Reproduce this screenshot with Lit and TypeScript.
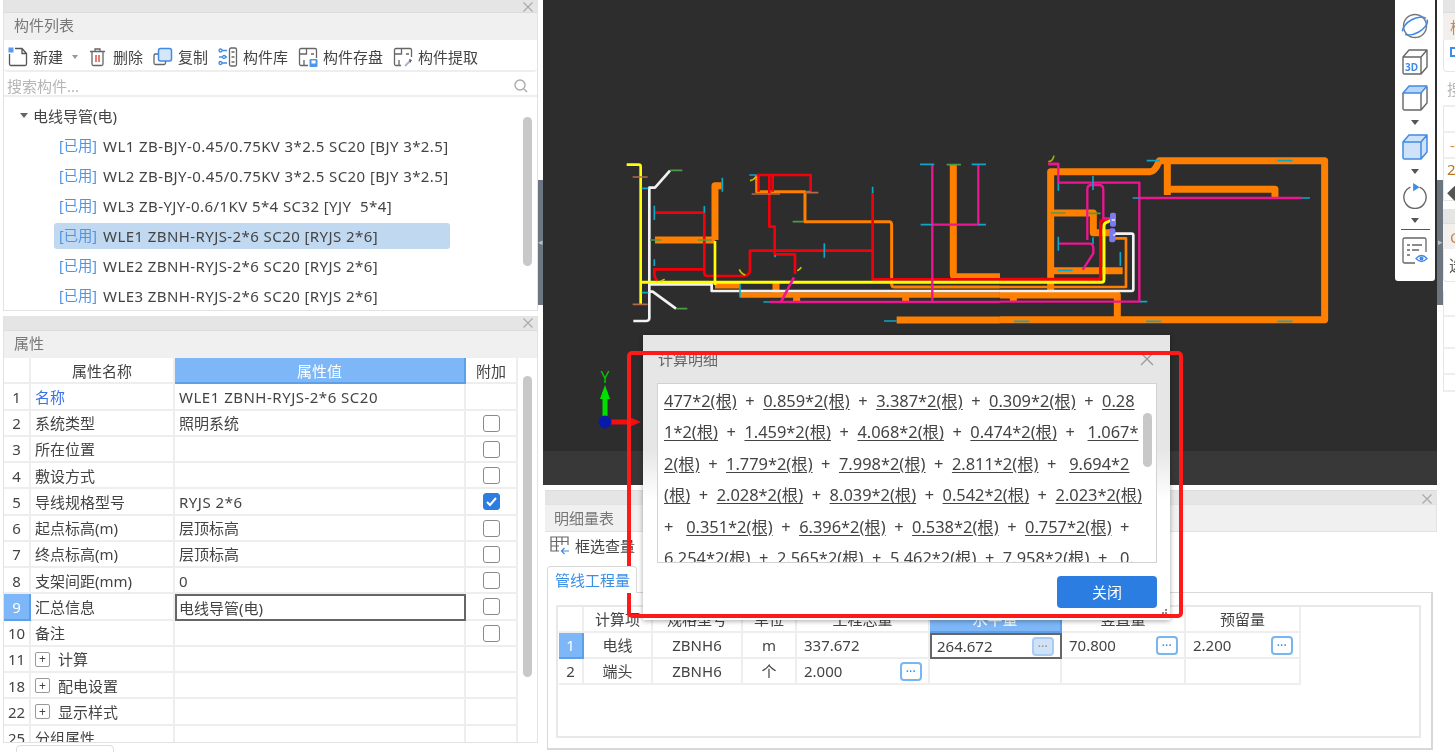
import { LitElement, html, css, svg } from 'lit';
import { customElement } from 'lit/decorators.js';

const TREE = [
  'WL1 ZB-BJY-0.45/0.75KV 3*2.5 SC20 [BJY 3*2.5]',
  'WL2 ZB-BJY-0.45/0.75KV 3*2.5 SC20 [BJY 3*2.5]',
  'WL3 ZB-YJY-0.6/1KV 5*4 SC32 [YJY  5*4]',
  'WLE1 ZBNH-RYJS-2*6 SC20 [RYJS 2*6]',
  'WLE2 ZBNH-RYJS-2*6 SC20 [RYJS 2*6]',
  'WLE3 ZBNH-RYJS-2*6 SC20 [RYJS 2*6]',
];

// no, name, value, check: 0 none / 1 empty / 2 ticked, plus = expandable row
const PROPS: [string, string, string, number, boolean?][] = [
  ['1', '名称', 'WLE1 ZBNH-RYJS-2*6 SC20', 0],
  ['2', '系统类型', '照明系统', 1],
  ['3', '所在位置', '', 1],
  ['4', '敷设方式', '', 1],
  ['5', '导线规格型号', 'RYJS 2*6', 2],
  ['6', '起点标高(m)', '层顶标高', 1],
  ['7', '终点标高(m)', '层顶标高', 1],
  ['8', '支架间距(mm)', '0', 1],
  ['9', '汇总信息', '电线导管(电)', 1],
  ['10', '备注', '', 1],
  ['11', '计算', '', 0, true],
  ['18', '配电设置', '', 0, true],
  ['22', '显示样式', '', 0, true],
  ['25', '分组属性', '', 0],
];

const DETAIL = [
  '477*2(根)  +  0.859*2(根)  +  3.387*2(根)  +  0.309*2(根)  +  0.28',
  '1*2(根)  +  1.459*2(根)  +  4.068*2(根)  +  0.474*2(根)  +   1.067*',
  '2(根)  +  1.779*2(根)  +  7.998*2(根)  +  2.811*2(根)  +   9.694*2',
  '(根)  +  2.028*2(根)  +  8.039*2(根)  +  0.542*2(根)  +  2.023*2(根)',
  '+   0.351*2(根)  +  6.396*2(根)  +  0.538*2(根)  +  0.757*2(根)  +',
  '6.254*2(根)  +  2.565*2(根)  +  5.462*2(根)  +  7.958*2(根)  +   0.',
];

const ORANGE = '#ff8000';
const RED = '#f5000a';
const YELLOW = '#ffff00';
const WHITE = '#f2f2f2';
const PINK = '#ee1590';
const CYAN = '#0ea5c6';
const GREEN = '#4f9a48';
const BROWN = '#b5694a';

type Seg = [string, number, string];

// traced at 3x, so widths and coordinates are in crop units
const LEFT_SEGS: Seg[] = [
  [ORANGE, 18, 'M165 300H345M345 300V137H365'],
  [ORANGE, 14, 'M345 437H420M420 465H1200'],
  [ORANGE, 18, 'M528 430V458M590 472V486M917 472V486M890 540H1200M1060 75V403Q1060 410 1070 410H1200'],
  [ORANGE, 7, 'M470 105V155H615V245H868Q875 245 875 255V433Q875 441 883 441H1200'],
  [WHITE, 6, 'M210 92L165 143H148V535Q147 543 138 543H100M148 455H158L228 506'],
  [WHITE, 6, 'M150 433H335V453H1200'],
  [RED, 6, 'M165 218H313V400Q313 408 322 408H432Q450 405 450 390V332H818M818 160V418H1200'],
  [RED, 6, 'M163 384V405Q165 415 172 422M165 388H313M470 105H632V155M476 105V155M518 105V155'],
  [RED, 6, 'M508 105V260H524V343H585V402'],
  [YELLOW, 6, 'M80 74H116Q122 74 122 80V492M345 303V435'],
  [YELLOW, 7, 'M120 427H1200'],
  ['#c9c400', 3, 'M450 122Q462 120 468 110M418 388Q424 402 436 405M592 392Q600 388 604 382M182 424L194 418'],
  [PINK, 5, 'M510 486H1200M997 75V486M997 254H1135V75'],
  [PINK, 6, 'M543 486L582 412'],
  [CYAN, 3, 'M125 145H145M367 113V155M163 197V240M313 198V218M163 358V378M125 458H145M420 432V472M673 310V353M818 140V160M448 105H470M620 155H632M525 345V352M490 486H510M852 543H890M960 73H1003M1115 73H1158M962 254H997M1135 254H1158'],
  [GREEN, 3, 'M210 91H247M150 300H185M293 300H335M578 245H612M228 506H262M1040 74H1083'],
  [BROWN, 3, 'M98 111H143M98 493H143M455 162H540M615 158H655'],
];

const RIGHT_SEGS: Seg[] = [
  [ORANGE, 18, 'M152 450V95H450Q465 95 478 62H974V539H0M502 62V165M502 148H825V172'],
  [ORANGE, 18, 'M152 219H280V278H335M152 392H368M0 465H352V539M40 465V485'],
  [ORANGE, 6, 'M340 295H378V441H0'],
  [WHITE, 6, 'M0 453H395Q400 453 400 447V286Q400 281 395 281H340'],
  [RED, 8, 'M0 418H295Q302 418 302 408V250Q302 240 312 240H335'],
  [YELLOW, 7, 'M0 427H305Q312 427 312 418V258Q312 247 325 245L338 235'],
  [PINK, 5, 'M175 80V128H418V485H0M145 72H175M418 174H905'],
  [PINK, 5, 'M262 300V147Q262 135 275 135H298Q310 135 310 150V235H335M175 311H268Q280 311 280 325V340L248 390'],
  ['#a8b000', 3, 'M145 65Q158 65 162 47'],
  [CYAN, 3, 'M440 62H480M175 130V152M279 108V150M175 290V332M279 292V312M361 336V378M173 391H218M398 174H418M905 174H930M832 62H878M420 485H442M42 544H88M438 544H484M832 544H878'],
  [GREEN, 3, 'M152 219H197M265 220H302'],
];

const segs = (list: Seg[]) =>
  list.map(
    ([c, w, d]) =>
      svg`<path d=${d} stroke=${c} stroke-width=${w + (w > 10 ? 3 : 2)} fill="none" stroke-linejoin="round"></path>`
  );

@customElement('app-root')
export class AppRoot extends LitElement {
  static styles = css`
    :host {
      display: block;
      position: relative;
      width: 1455px;
      height: 752px;
      overflow: hidden;
      background: #fff;
      color: #444;
      font: 15px/1.2 'Noto Sans', 'Noto Sans CJK SC', sans-serif;
      filter: blur(0.45px);
    }
    * {
      box-sizing: border-box;
    }
    svg {
      display: block;
      flex: none;
    }
    .page {
      display: grid;
      grid-template-columns: 538px 5px 894px 6px 12px;
      height: 752px;
    }
    .left {
      padding: 0 0 0 3px;
      display: flex;
      flex-direction: column;
    }
    .gutter {
      padding-top: 180px;
    }
    .gutter div {
      height: 125px;
      background: #6b7680;
      display: flex;
      align-items: center;
      justify-content: center;
      color: #b9c0c6;
      font-size: 9px;
    }
    .panel {
      border: 1px solid #e2e2e2;
      border-top: 0;
      display: flex;
      flex-direction: column;
      overflow: hidden;
      position: relative;
    }
    .strip {
      height: 12px;
      flex: none;
      background: #e5e5e5;
      position: relative;
    }
    .x {
      position: absolute;
      right: 3px;
      top: 1px;
    }
    .title {
      height: 28px;
      flex: none;
      background: #f0f0f0;
      border-top: 1px solid #dcdcdc;
      padding: 0 10px 3px;
      display: flex;
      align-items: center;
      color: #777;
    }
    .tools {
      height: 32px;
      flex: none;
      display: flex;
      align-items: center;
      padding: 3px 0 0 4px;
      border-bottom: 2px solid #eee;
      border-radius: 0 0 4px 4px;
    }
    .tool {
      display: flex;
      align-items: center;
      gap: 5px;
      margin-right: 10px;
      white-space: nowrap;
    }
    .down {
      width: 0;
      height: 0;
      border: 3px solid transparent;
      border-top: 4px solid #999;
      border-bottom: 0;
      margin-left: 4px;
    }
    .search {
      height: 25px;
      flex: none;
      display: flex;
      align-items: center;
      justify-content: space-between;
      padding: 5px 9px 0 3px;
      color: #b5b5b5;
      border-bottom: 2px solid #eee;
    }
    .tree {
      flex: 1;
      position: relative;
      overflow: hidden;
    }
    .group {
      height: 34px;
      display: flex;
      align-items: center;
      padding: 3px 0 0 16px;
      gap: 5px;
    }
    .group i {
      border: 4px solid transparent;
      border-top: 5px solid #666;
      border-bottom: 0;
    }
    .node {
      height: 30px;
      display: flex;
      align-items: center;
      margin-left: 50px;
      width: 396px;
    }
    .node span {
      height: 26px;
      width: 100%;
      padding: 0 5px;
      display: flex;
      align-items: center;
      gap: 6px;
      border-radius: 3px;
      white-space: pre;
      letter-spacing: 0.42px;
    }
    .node.sel span {
      background: #c0d8f0;
    }
    .node b {
      font-weight: 400;
      font-size: 14.3px;
      letter-spacing: 0;
      color: #4f93e6;
    }
    .scroll {
      position: absolute;
      width: 9px;
      border-radius: 5px;
      background: #c8c8c8;
    }
    .props {
      display: grid;
      grid-template-columns: 27px 144px 291px 52px;
      grid-auto-rows: 26.25px;
      width: 514px;
    }
    .props > div,
    .grid > div {
      display: flex;
      align-items: center;
      border-right: 2px solid #eee;
      border-bottom: 2px solid #eee;
      white-space: pre;
      overflow: hidden;
      min-width: 0;
    }
    .props > div {
      padding-top: 1px;
    }
    .props .n,
    .props .h,
    .grid .n,
    .grid .h,
    .grid .c {
      justify-content: center;
    }
    .props .t {
      padding-left: 4px;
    }
    .grid .t {
      padding-left: 7px;
    }
    .props .v {
      padding-left: 4px;
    }
    .props .lat {
      letter-spacing: 0.5px;
    }
    .blue {
      color: #3b72e6;
    }
    .props .hi,
    .grid .hi {
      background: #7db7f7;
      color: #fff;
      border-color: #5d9fe8;
    }
    .props .edit,
    .grid .edit {
      border: 2px solid #666;
    }
    .props .edit {
      padding-left: 2px;
    }
    .grid .edit {
      padding-left: 5px;
    }
    .box {
      display: flex;
      align-items: center;
      justify-content: center;
      white-space: normal;
      width: 17px;
      height: 17px;
      border: 1px solid #8a8a8a;
      border-radius: 3px;
    }
    .box.on {
      background: #2b7de1;
      border-color: #2b7de1;
    }
    .plus {
      width: 15px;
      height: 15px;
      border: 1px solid #999;
      border-radius: 2px;
      margin-right: 8px;
      display: flex;
      align-items: center;
      justify-content: center;
      font-size: 12px;
      line-height: 1;
    }
    .stub {
      position: absolute;
      left: 16px;
      top: 745px;
      width: 98px;
      height: 12px;
      border: 1px solid #ddd;
      border-radius: 4px;
    }
    .center {
      display: flex;
      flex-direction: column;
      min-width: 0;
    }
    .canvas {
      height: 485px;
      flex: none;
      position: relative;
      background: linear-gradient(#2d2d2d 451px, #383838 451px);
    }
    .canvas > svg {
      position: absolute;
      left: 0;
      top: 0;
    }
    .views {
      position: absolute;
      left: 852px;
      top: 0;
      width: 40px;
      height: 281px;
      background: #fff;
      border-radius: 0 0 3px 3px;
      display: flex;
      flex-direction: column;
      align-items: center;
      padding-top: 12px;
    }
    .views svg {
      position: static;
    }
    .views .down {
      border-width: 4px;
      border-top: 5px solid #555;
      border-bottom: 0;
      margin: 9px 0;
    }
    .views hr {
      width: 29px;
      margin: -3px 0 7px;
      border: 0;
      border-top: 1px solid #555;
    }
    .lower {
      flex: 1;
      margin: 5px 0 0 2px;
      position: relative;
      display: flex;
      flex-direction: column;
      overflow: hidden;
    }
    .lower .strip {
      height: 14px;
      border-top: 1px solid #ddd;
    }
    .lower .x {
      right: 4px;
      top: 2px;
    }
    .lower .title {
      padding: 0 9px 1px;
      border: 1px solid #e2e2e2;
      border-left: 0;
    }
    .pick {
      height: 30px;
      flex: none;
      display: flex;
      align-items: center;
      gap: 5px;
      padding: 0 0 2px 5px;
    }
    .tabs {
      margin-top: 4px;
      height: 26px;
      flex: none;
      display: flex;
    }
    .tab {
      width: 90px;
      padding-left: 7px;
      color: #3a8ee6;
      border: 1px solid #d8d8d8;
      border-bottom: 0;
      border-radius: 4px 4px 0 0;
      margin-left: 2px;
      display: flex;
      align-items: center;
      background: #fff;
      position: relative;
      z-index: 1;
      margin-bottom: -1px;
    }
    .sheet {
      margin: 0 4px 0 2px;
      height: 158px;
      border: 1px solid #d8d8d8;
      border-width: 1px 2px 2px 1px;
      padding: 12px 10px 12px 8px;
      flex: none;
    }
    .inner {
      border: 2px solid #e8e8e8;
      height: 133px;
    }
    .grid {
      display: grid;
      grid-template-columns: 25px 69px 90px 54px 133px 132px 124px 115px;
      grid-auto-rows: 26px;
      width: 742px;
      margin-left: 1px;
    }
    .grid .t {
      justify-content: space-between;
      padding-right: 6px;
    }
    .more {
      width: 22px;
      height: 19px;
      border: 2px solid #78b6f0;
      border-radius: 4px;
      color: #3a8ee6;
      display: flex;
      align-items: center;
      justify-content: center;
      background: #fff;
      flex: none;
      font: 700 10px/1 'Liberation Sans', sans-serif;
      letter-spacing: 0.5px;
      padding-bottom: 5px;
    }
    .more.off {
      background: #cfe2f8;
      color: #999;
      border-color: #a9cdf2;
    }
    .right {
      overflow: hidden;
      position: relative;
    }
    .far {
      width: 240px;
      display: flex;
      flex-direction: column;
      color: #555;
    }
    .far .title {
      padding: 0 0 0 7px;
      color: #c08a60;
      background: #f2efec;
    }
    .far .tools {
      padding: 0 0 0 5px;
      border: 1px solid #e6e6e6;
      border-top: 0;
      border-right: 0;
    }
    .far .search {
      height: 35px;
      padding: 0 0 0 4px;
    }
    .far .line {
      height: 26px;
      border-bottom: 2px solid #eee;
      border-left: 1px solid #e6e6e6;
      padding-left: 6px;
      display: flex;
      align-items: center;
    }
    .far .tall {
      height: 42px;
      flex-direction: column;
      align-items: flex-start;
      gap: 9px;
      padding: 3px 0 0 3px;
      line-height: 1;
      border-bottom: 1px solid #e6e6e6;
    }
    .far .gap {
      height: 8px;
    }
    .dialog {
      position: absolute;
      left: 643px;
      top: 335px;
      width: 527px;
      height: 285px;
      padding: 0 13px 0 14px;
      background: linear-gradient(#e6e6e6 40%, #fff 58%);
      box-shadow: 0 1px 5px rgba(0, 0, 0, 0.35);
    }
    .dlg-head {
      height: 48px;
      padding: 0 3px 1px 1px;
      display: flex;
      align-items: center;
      justify-content: space-between;
      color: #666;
    }
    .detail {
      height: 180px;
      border: 1px solid #d2d2d2;
      background: #fff;
      position: relative;
      overflow: hidden;
      padding: 1px 0 0 6px;
      font-size: 16.4px;
      line-height: 31.4px;
    }
    .detail div {
      white-space: pre;
    }
    .detail u {
      text-underline-offset: 2px;
    }
    .detail .scroll {
      right: 4px;
      top: 29px;
      height: 54px;
    }
    .dlg-foot {
      display: flex;
      justify-content: flex-end;
      padding-top: 13px;
    }
    .dlg-foot button {
      width: 100px;
      height: 32px;
      border: 0;
      border-radius: 4px;
      background: #2b7de1;
      color: #fff;
      font: inherit;
    }
    .grip {
      position: absolute;
      right: 2px;
      bottom: 2px;
    }
    .mark {
      position: absolute;
      left: 627px;
      top: 351px;
      width: 556px;
      height: 267px;
      border: 4px solid #ff1a1a;
      border-radius: 5px;
    }
  `;

  private closeX(size = 12) {
    return svg`<svg class="x" width=${size} height=${size} viewBox="0 0 12 12" fill="none" stroke="#aaa" stroke-width="1.2"><path d="M1.5 1.5l9 9M10.5 1.5l-9 9"/></svg>`;
  }

  private listPanel() {
    return html`
      <section class="panel" style="height:311px">
        <div class="strip">${this.closeX()}</div>
        <div class="title">构件列表</div>
        <div class="tools">
          <div class="tool">
            <svg width="20" height="20" viewBox="0 0 20 20" fill="none" stroke="#555" stroke-width="1.3">
              <path d="M7 1.5h7l4.5 5v10.5a1.5 1.5 0 0 1-1.5 1.5H3a1.5 1.5 0 0 1-1.5-1.5V7M14 1.5V6.5h4.5" />
              <rect x="0.5" y="0.5" width="5" height="5" fill="#5a9be8" stroke="none" />
            </svg>
            新建<i class="down"></i>
          </div>
          <div class="tool">
            <svg width="20" height="20" viewBox="0 0 20 20" fill="none" stroke="#666" stroke-width="1.3">
              <path d="M2 4.5h15M7 4.5V2h5v2.500M4 4.500v12.500a1.500 1.500 0 0 0 1.500 1.500h8a1.500 1.500 0 0 0 1.500-1.500V4.500" />
              <path d="M8 8v7M11 8v7" stroke="#e25b4f" stroke-width="1.600" />
            </svg>
            删除
          </div>
          <div class="tool">
            <svg width="20" height="20" viewBox="0 0 20 20" fill="none">
              <path d="M5 7H2.500A1.500 1.500 0 0 0 1 8.500V16a1.500 1.500 0 0 0 1.500 1.500H11A1.500 1.500 0 0 0 12.500 16v-2" stroke="#666" stroke-width="1.300" />
              <rect x="5.500" y="1.500" width="13" height="12.500" rx="2" fill="#d6e6fa" stroke="#3f8be6" stroke-width="1.500" />
            </svg>
            复制
          </div>
          <div class="tool">
            <svg width="20" height="20" viewBox="0 0 20 20" fill="none" stroke="#666" stroke-width="1.300">
              <rect x="11.500" y="1" width="7" height="18" rx="1.500" />
              <path d="M13.500 5h3M13.500 10h3M13.500 15h3" />
              <path d="M1 3.500h8M1 10h8M1 16h8" stroke="#3f8be6" />
              <circle cx="2.500" cy="3.500" r="1.500" fill="#fff" stroke="#3f8be6" />
              <circle cx="6" cy="10" r="1.500" fill="#fff" stroke="#3f8be6" />
              <circle cx="2.500" cy="16" r="1.500" fill="#fff" stroke="#3f8be6" />
            </svg>
            构件库
          </div>
          <div class="tool">
            <svg width="20" height="20" viewBox="0 0 20 20" fill="none" stroke="#666" stroke-width="1.300">
              <path d="M10 18.500H3A1.500 1.500 0 0 1 1.500 17V3A1.500 1.500 0 0 1 3 1.500h14A1.500 1.500 0 0 1 18.500 3v8M1.500 7h7V1.500M6 13v5.500M13 7h3" />
              <rect x="11.500" y="12" width="8" height="8" rx="1" fill="#4f97ea" stroke="none" />
              <rect x="13.500" y="13.500" width="4" height="3" fill="#fff" stroke="none" />
            </svg>
            构件存盘
          </div>
          <div class="tool">
            <svg width="20" height="20" viewBox="0 0 20 20" fill="none" stroke="#666" stroke-width="1.300">
              <path d="M8 18.500H3A1.500 1.500 0 0 1 1.500 17V3A1.500 1.500 0 0 1 3 1.500h14A1.500 1.500 0 0 1 18.500 3v7M1.500 7h7V1.500M6 13v5.500M13 7h3" />
              <path d="M12 19l5-5" stroke="#9db6d6" stroke-width="2" />
              <path d="M16 12l3 1-2 3z" fill="#555" stroke="none" />
            </svg>
            构件提取
          </div>
        </div>
        <div class="search">
          搜索构件...
          <svg width="14" height="14" viewBox="0 0 14 14" fill="none" stroke="#aaa" stroke-width="1.400">
            <circle cx="6" cy="6" r="5" />
            <path d="M10 10l3 3" />
          </svg>
        </div>
        <div class="tree">
          <div class="group"><i></i>电线导管(电)</div>
          ${TREE.map(
            (t, i) => html`<div class="node ${i === 3 ? 'sel' : ''}"><span><b>[已用]</b>${t}</span></div>`
          )}
          <div class="scroll" style="left:519px;top:20px;height:149px"></div>
        </div>
      </section>
    `;
  }

  private propPanel() {
    return html`
      <section class="panel" style="margin-top:5px;height:427px">
        <div class="strip" style="height:14px">${this.closeX()}</div>
        <div class="title">属性</div>
        <div class="props">
          <div></div>
          <div class="h">属性名称</div>
          <div class="h hi">属性值</div>
          <div class="h">附加</div>
          ${PROPS.map(
            ([no, name, value, check, plus]) => html`
              <div class="n ${no === '9' ? 'hi' : ''}">${no}</div>
              <div class="t ${no === '1' ? 'blue' : ''}">${plus ? html`<span class="plus">+</span>` : ''}${name}</div>
              <div class="v ${no === '9' ? 'edit' : ''} ${/[A-Z]/.test(value) ? 'lat' : ''}">${value}</div>
              <div class="h">
                ${check
                  ? html`<span class="box ${check === 2 ? 'on' : ''}">
                      ${check === 2
                        ? svg`<svg width="15" height="15" viewBox="0 0 15 15" fill="none" stroke="#fff" stroke-width="2"><path d="M3 8l3 3 6-7"/></svg>`
                        : ''}
                    </span>`
                  : ''}
              </div>
            `
          )}
        </div>
        <div class="scroll" style="left:519px;top:60px;height:301px"></div>
      </section>
    `;
  }

  private drawing() {
    return html`
      <svg width="894" height="485" viewBox="543 0 894 485">
        <g transform="translate(600 140) scale(0.3333)">${segs(LEFT_SEGS)}</g>
        <g transform="translate(1000 140) scale(0.3333)">
          ${segs(RIGHT_SEGS)}
          <rect x="330" y="218" width="18" height="42" rx="6" fill="#7b7bef" />
          <rect x="328" y="265" width="18" height="42" rx="6" fill="#7b7bef" />
          <path d="M145 72H175V84" stroke="${PINK}" stroke-width="7" fill="none" />
          <path d="M335 240H345M340 285H346" stroke="${WHITE}" stroke-width="4" />
        </g>
        <path d="M605 416V392" stroke="#00e000" stroke-width="5" />
        <path d="M605 385l5 14h-10z" fill="#00e000" />
        <text x="605" y="383" text-anchor="middle" fill="#00c800" font-size="16">Y</text>
        <path d="M610 422H628" stroke="#f01010" stroke-width="5" />
        <path d="M641 422l-14-6v12z" fill="#f01010" />
        <circle cx="605" cy="422" r="6.500" fill="#0a1aa8" />
      </svg>
    `;
  }

  private views() {
    return html`
      <div class="views">
        <svg width="28" height="28" viewBox="0 0 28 28" fill="none" stroke="#777" stroke-width="1.400">
          <circle cx="14" cy="14" r="11.500" />
          <ellipse cx="14" cy="14" rx="13.500" ry="7" transform="rotate(-28 14 14)" stroke="#3f8be6" stroke-width="1.600" stroke-dasharray="30 4 30" />
        </svg>
        <svg style="margin-top:9px" width="26" height="26" viewBox="0 0 26 26" fill="none" stroke="#666" stroke-width="1.400" stroke-linejoin="round">
          <path d="M1 8L7 1h18v17l-6 7H2.500A1.500 1.500 0 0 1 1 23.500zM1 8h18v17M19 8l6-7" />
          <text x="3" y="22" font-size="10" font-weight="700" fill="#3f8be6" stroke="none">3D</text>
        </svg>
        <svg style="margin-top:10px" width="26" height="26" viewBox="0 0 26 26" fill="none" stroke="#666" stroke-width="1.400" stroke-linejoin="round">
          <path d="M19 8v17H2.500A1.500 1.500 0 0 1 1 23.500V8M19 25l6-7V2" />
          <path d="M1 8L7 1h18l-6 7z" fill="#b8d6f8" stroke="#3f8be6" />
        </svg>
        <i class="down"></i>
        <svg width="26" height="26" viewBox="0 0 26 26" fill="#cfe2f8" stroke="#3f8be6" stroke-width="1.500" stroke-linejoin="round">
          <path d="M1 8L7 1h18v17l-6 7H2.500A1.500 1.500 0 0 1 1 23.500zM1 8h18v17M19 8l6-7" />
        </svg>
        <i class="down"></i>
        <svg width="26" height="26" viewBox="0 0 26 28" fill="none" stroke="#666" stroke-width="1.500">
          <path d="M8 4.500a12 12 0 1 0 10 0" />
          <path d="M11 0l7 4.500-7 4.500z" fill="#3f8be6" stroke="none" />
        </svg>
        <i class="down"></i>
        <hr />
        <svg width="26" height="27" viewBox="0 0 26 27" fill="none" stroke="#666" stroke-width="1.300">
          <path d="M13 26H2.500A1.500 1.500 0 0 1 1 24.500V2.500A1.500 1.500 0 0 1 2.500 1h20A1.500 1.500 0 0 1 24 2.500V15" />
          <path d="M5 8h3M10 8h10M5 13h3M10 13h7M5 18h3" />
          <path d="M14 21.500q5.500-6 11 0q-5.500 6-11 0z" stroke="#3f8be6" fill="#fff" />
          <circle cx="19.500" cy="21.500" r="2" fill="#3f8be6" stroke="none" />
        </svg>
      </div>
    `;
  }

  private lowerPanel() {
    const more = (off = false) => html`<span class="more ${off ? 'off' : ''}">...</span>`;
    return html`
      <section class="lower">
        <div class="strip">${this.closeX()}</div>
        <div class="title">明细量表</div>
        <div class="pick">
          <svg width="20" height="20" viewBox="0 0 20 20" fill="none" stroke="#666" stroke-width="1.200">
            <path d="M9 15H1V1h17v8M1 5.500h17M6.500 1v14M12 1v8M1 10h8" />
            <path d="M19 15h-7M14.500 12l-3 3 3 3" stroke="#3f8be6" />
          </svg>
          框选查量
        </div>
        <div class="tabs"><div class="tab">管线工程量</div></div>
        <div class="sheet">
          <div class="inner">
            <div class="grid">
              <div></div>
              <div class="h">计算项</div>
              <div class="h">规格型号</div>
              <div class="h">单位</div>
              <div class="h">工程总量</div>
              <div class="h hi">水平量</div>
              <div class="h">竖直量</div>
              <div class="h">预留量</div>

              <div class="n hi">1</div>
              <div class="c">电线</div>
              <div class="c">ZBNH6</div>
              <div class="c">m</div>
              <div class="t">337.672</div>
              <div class="t edit">264.672${more(true)}</div>
              <div class="t">70.800${more()}</div>
              <div class="t">2.200${more()}</div>

              <div class="n">2</div>
              <div class="c">端头</div>
              <div class="c">ZBNH6</div>
              <div class="c">个</div>
              <div class="t">2.000${more()}</div>
              <div></div>
              <div></div>
              <div></div>
            </div>
          </div>
        </div>
      </section>
    `;
  }

  private farColumn() {
    return html`
      <div class="far">
        <div class="strip"></div>
        <div class="title">构件</div>
        <div class="tools">
          <svg width="20" height="20" viewBox="0 0 20 20" fill="none" stroke="#3f8be6" stroke-width="2">
            <path d="M2 2h10v8H2zM6 14h10M11 10v8" />
          </svg>
        </div>
        <div class="search">搜索</div>
        <div class="line"></div>
        <div class="line" style="color:#e08a2a">-</div>
        <div class="line tall"><span style="color:#b8741f">2</span><span>◆</span></div>
        <div class="gap"></div>
        <div class="strip" style="height:14px"></div>
        <div class="title" style="height:26px">C</div>
        <div class="tools" style="height:33px">选</div>
        <div class="gap" style="height:9px"></div>
        <div class="line"></div>
        <div class="line" style="height:32px"></div>
        <div class="line"></div>
        <div class="line" style="height:17px"></div>
      </div>
    `;
  }

  render() {
    return html`
      <div class="page">
        <div class="left">${this.listPanel()} ${this.propPanel()}</div>
        <div class="gutter"><div>◂</div></div>
        <div class="center">
          <div class="canvas">${this.drawing()} ${this.views()}</div>
          ${this.lowerPanel()}
        </div>
        <div class="gutter"><div>▸</div></div>
        <div class="right">${this.farColumn()}</div>
      </div>
      <div class="stub"></div>

      <div class="dialog">
        <div class="dlg-head">
          计算明细
          <svg width="14" height="14" viewBox="0 0 14 14" fill="none" stroke="#999" stroke-width="1.300"><path d="M1 1l12 12M13 1L1 13" /></svg>
        </div>
        <div class="detail">
          ${DETAIL.map(
            (line) => html`<div>${line.split(/(\s*\+\s*)/).map((p) => (p.includes('+') ? p : html`<u>${p}</u>`))}</div>`
          )}
          <div class="scroll"></div>
        </div>
        <div class="dlg-foot"><button>关闭</button></div>
        <svg class="grip" width="9" height="9" viewBox="0 0 9 9" fill="#888">
          <rect x="6" y="0" width="2" height="2" /><rect x="3" y="3" width="2" height="2" /><rect x="6" y="3" width="2" height="2" />
          <rect x="0" y="6" width="2" height="2" /><rect x="3" y="6" width="2" height="2" /><rect x="6" y="6" width="2" height="2" />
        </svg>
      </div>
      <div class="mark"></div>
    `;
  }
}
